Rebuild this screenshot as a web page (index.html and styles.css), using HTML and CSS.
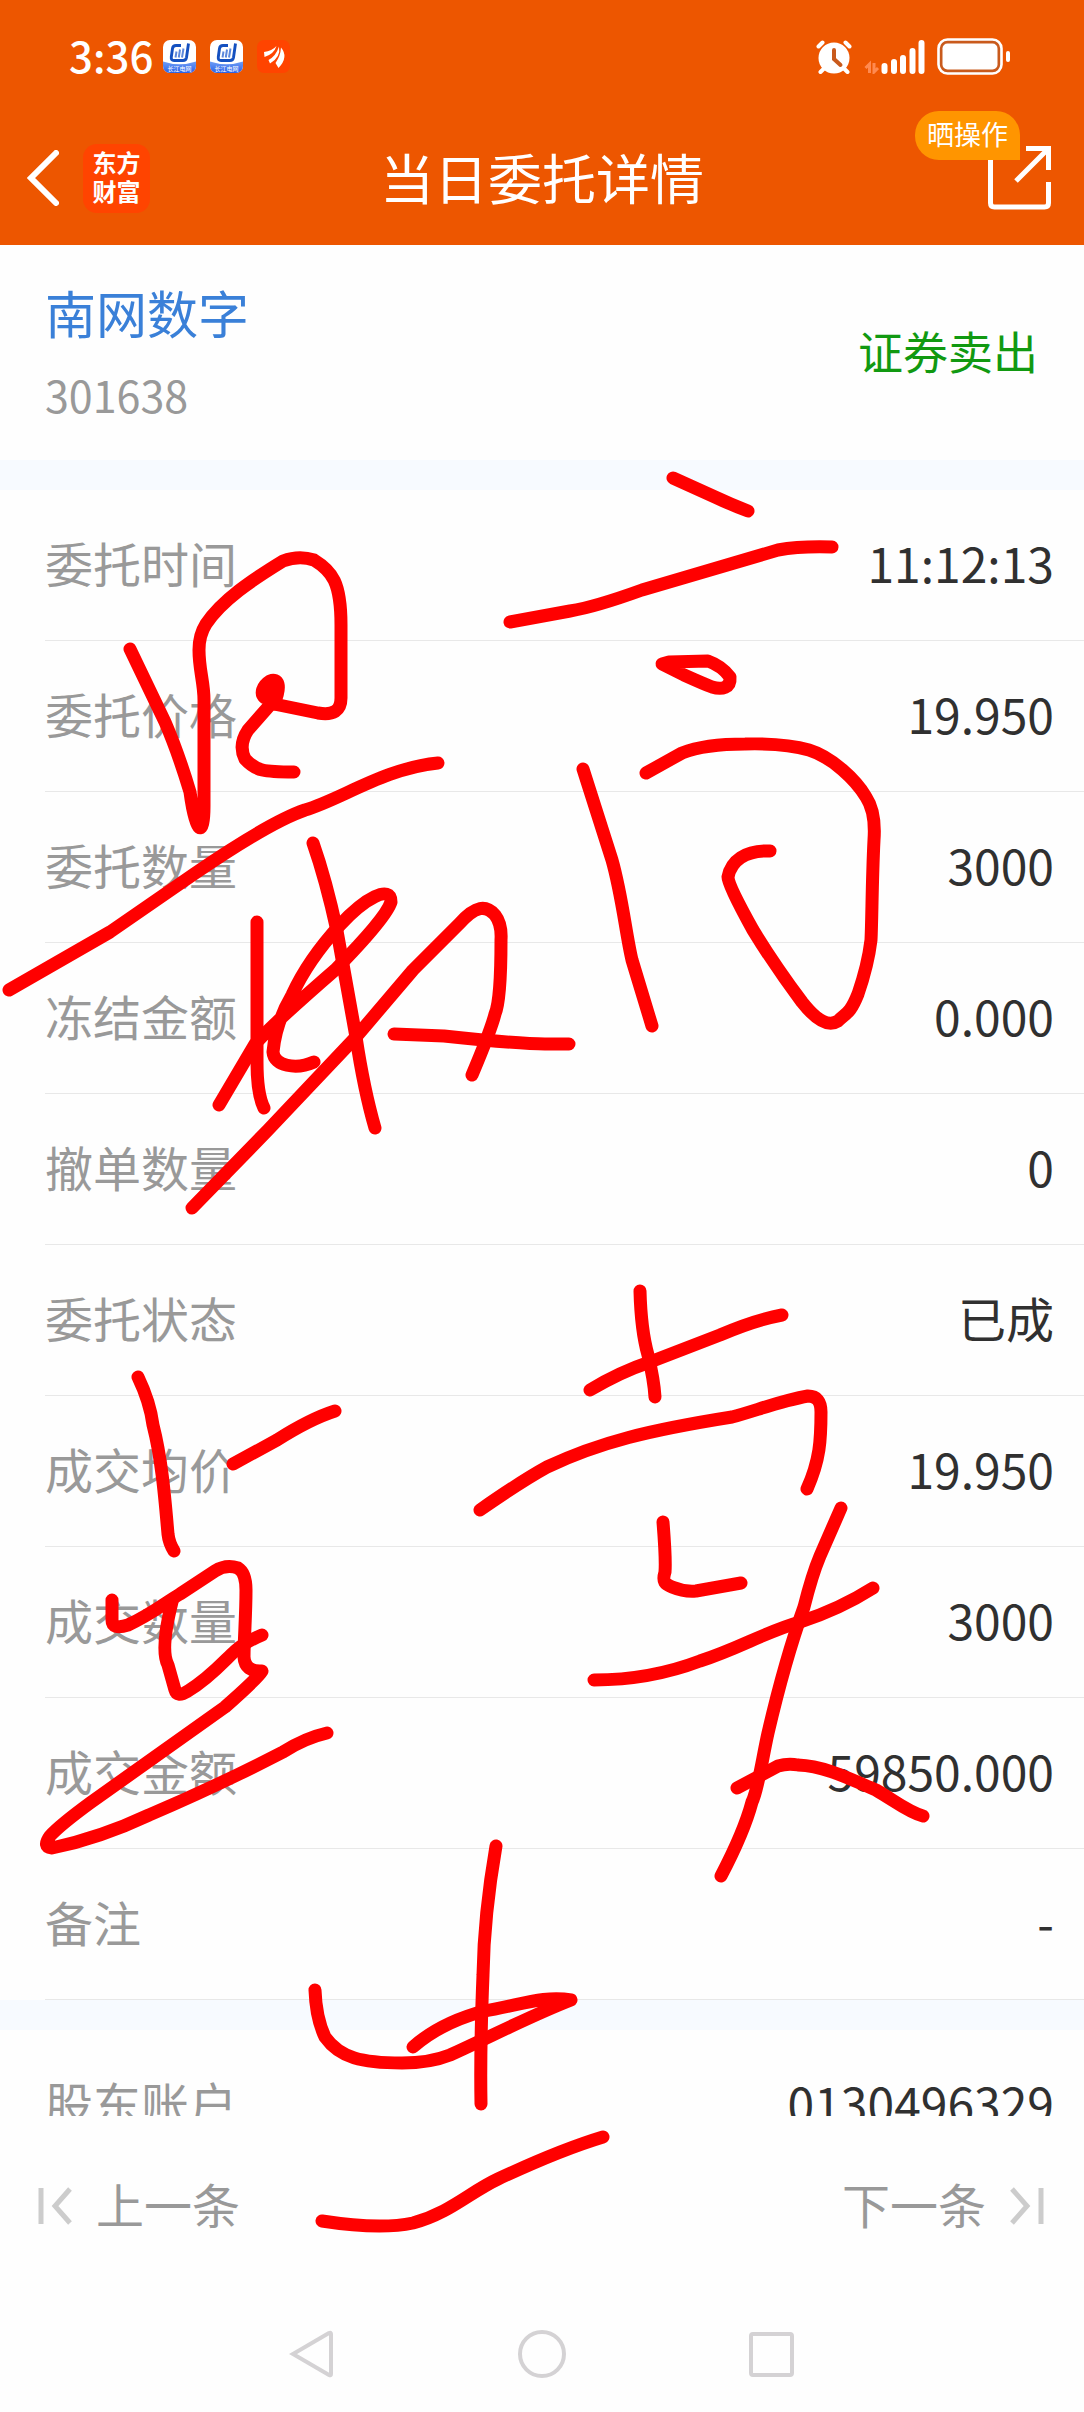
FILE: index.html
```
<!DOCTYPE html>
<html lang="zh-CN">
  <head>
    <meta charset="UTF-8" />
    <meta name="viewport" content="width=device-width, initial-scale=1.0" />
    <title>当日委托详情</title>
    <link rel="stylesheet" href="styles.css">
  </head>
  <body>
    <header class="header">
      <div class="status">
        <span class="status__time">3:36</span>
        <div class="status__apps">
          <svg class="app-icon" viewBox="0 0 33 33">
            <defs>
              <linearGradient id="wave" x1="0" y1="0" x2="0" y2="1">
                <stop offset="0" stop-color="#6f9df5" />
                <stop offset="1" stop-color="#2a62e8" />
              </linearGradient>
            </defs>
            <rect width="33" height="33" rx="7" fill="#fff" />
            <path d="M0 21.500Q16.500 27 33 21.500V26a7 7 0 0 1-7 7H7a7 7 0 0 1-7-7z" fill="url(#wave)" />
            <path d="M18 5.500h-5q-3 0-3.500 3L8.300 17q-.4 3.500 2.700 3.500h9q3 0 3.500-3L25.500 3.500" fill="none" stroke="#1450c0" stroke-width="2.900" />
            <path d="M13.500 11.500l-1 6M17 9.500l-1.200 8M20.500 8.500L19 17.500" stroke="#5c88dc" stroke-width="2" />
            <text class="app-icon__name" x="16.500" y="31" text-anchor="middle">长江电网</text>
          </svg>
          <svg class="app-icon" viewBox="0 0 33 33">
            <rect width="33" height="33" rx="7" fill="#fff" />
            <path d="M0 21.500Q16.500 27 33 21.500V26a7 7 0 0 1-7 7H7a7 7 0 0 1-7-7z" fill="url(#wave)" />
            <path d="M18 5.500h-5q-3 0-3.500 3L8.300 17q-.4 3.500 2.700 3.500h9q3 0 3.500-3L25.500 3.500" fill="none" stroke="#1450c0" stroke-width="2.900" />
            <path d="M13.500 11.500l-1 6M17 9.500l-1.200 8M20.500 8.500L19 17.500" stroke="#5c88dc" stroke-width="2" />
            <text class="app-icon__name" x="16.500" y="31" text-anchor="middle">长江电网</text>
          </svg>
          <svg class="app-icon" viewBox="0 0 33 33">
            <rect width="33" height="33" rx="7" fill="#ff4400" />
            <path d="M7 12Q15 11 19.500 6Q17 14 7.500 17zM11.500 20Q19 16 22 6.500Q24 17 13 23.500zM18.500 23Q23.500 16 24 7.500Q32 17 21.500 28z" fill="#fff" />
          </svg>
        </div>
        <div class="status__system">
          <svg width="36" height="34" viewBox="0 0 36 34">
            <circle cx="18" cy="18" r="15.500" fill="#fff" />
            <path d="M2.500 6.500l4-4M33.500 6.500l-4-4M7.500 29l-3 3M28.500 29l3 3" stroke="#fff" stroke-width="4" stroke-linecap="round" />
            <path d="M18 10v9l6.500 6" fill="none" stroke="#c95a1c" stroke-width="4" stroke-linecap="round" />
          </svg>
          <svg width="61" height="34" viewBox="0 0 61 34">
            <path d="M5.500 33V24L1.500 28M10 23v9l4-4" fill="none" stroke="#ff8a50" stroke-width="3" />
            <path d="M20.500 26v5M30 22v9M39 18v13M48.500 11v20M57.500 3v28" stroke="#fff" stroke-width="6" stroke-linecap="round" />
          </svg>
          <svg width="74" height="37" viewBox="0 0 74 37">
            <rect x="1.500" y="1.500" width="63" height="34" rx="9" fill="#c95a1c" stroke="#fff" stroke-width="2.600" />
            <rect x="5.500" y="5.500" width="55" height="26" rx="5" fill="#fff" />
            <rect x="69" y="13" width="4" height="11" rx="2" fill="#fff" />
          </svg>
        </div>
      </div>
      <div class="toolbar">
        <div class="toolbar__left">
          <button class="toolbar__back" aria-label="返回">
            <svg width="32" height="56" viewBox="0 0 32 56">
              <path d="M29 3L4 28l25 25" fill="none" stroke="#fff" stroke-width="6" stroke-linecap="round" />
            </svg>
          </button>
          <div class="brand">东方<br>财富</div>
        </div>
        <h1 class="toolbar__title">当日委托详情</h1>
        <button class="share" aria-label="分享">
          <svg width="64" height="64" viewBox="0 0 64 64">
            <path d="M3.500 0V57q0 4 4 4H57.500q4 0 4-4V36M39 2.500H61.500V24M61 3L29 35" fill="none" stroke="#fff" stroke-width="5" />
          </svg>
          <span class="share__tip">晒操作</span>
        </button>
      </div>
    </header>

    <main class="content">
      <section class="stock">
        <div>
          <h2 class="stock__name">南网数字</h2>
          <p class="stock__code">301638</p>
        </div>
        <p class="stock__side">证券卖出</p>
      </section>

      <dl class="list">
        <div class="row"><dt>委托时间</dt><dd>11:12:13</dd></div>
        <div class="row"><dt>委托价格</dt><dd>19.950</dd></div>
        <div class="row"><dt>委托数量</dt><dd>3000</dd></div>
        <div class="row"><dt>冻结金额</dt><dd>0.000</dd></div>
        <div class="row"><dt>撤单数量</dt><dd>0</dd></div>
        <div class="row"><dt>委托状态</dt><dd>已成</dd></div>
        <div class="row"><dt>成交均价</dt><dd>19.950</dd></div>
        <div class="row"><dt>成交数量</dt><dd>3000</dd></div>
        <div class="row"><dt>成交金额</dt><dd>59850.000</dd></div>
        <div class="row"><dt>备注</dt><dd>-</dd></div>
      </dl>

      <dl class="list">
        <div class="row"><dt>股东账户</dt><dd>0130496329</dd></div>
      </dl>
    </main>

    <footer class="pager">
      <button class="pager__btn">
        <svg width="34" height="38" viewBox="0 0 34 38">
          <path d="M3 1v36M32 2L17 19l15 17" fill="none" stroke="#ccc" stroke-width="5" />
        </svg>
        <span class="pager__text">上一条</span>
      </button>
      <button class="pager__btn">
        <span class="pager__text">下一条</span>
        <svg width="34" height="38" viewBox="0 0 34 38">
          <path d="M31 1v36M2 2l15 17L2 36" fill="none" stroke="#ccc" stroke-width="5" />
        </svg>
      </button>
    </footer>

    <nav class="navbar">
      <button class="navbar__btn" aria-label="后退">
        <svg viewBox="0 0 48 48"><path d="M41 3L5 24l36 21q2 1 2-1V4q0-2-2-1z" /></svg>
      </button>
      <button class="navbar__btn" aria-label="主页">
        <svg viewBox="0 0 48 48"><circle cx="24" cy="24" r="22" /></svg>
      </button>
      <button class="navbar__btn" aria-label="最近任务">
        <svg viewBox="0 0 48 48"><rect x="3" y="4" width="41" height="41" rx="2" /></svg>
      </button>
    </nav>

    <svg class="ink" viewBox="0 0 1084 2412" aria-hidden="true">
      <!-- 最 -->
      <path d="M130 649L165 722Q178 752 190 792C196 836 204 838 204 806V700C204 682 199 670 199 650Q199 635 206 624C222 600 252 580 283 561Q299 555 314 560C332 571 341 582 341 625V698Q341 717 318 713L274 704" />
      <path d="M274 704C282 685 278 678 270 681C262 686 260 694 265 698Q272 697 274 690M270 705L248 730Q238 745 245 759C256 771 264 772 294 772" />
      <path d="M9 990L110 932L194 874Q270 822 305 810C340 800 385 768 438 763" />
      <path d="M257 922V1062Q257 1094 264 1108" />
      <path d="M219 1105L255 1044Q275 1022 335 970Q386 918 391 902C391 884 365 898 340 925Q308 960 292 995C282 1012 275 1030 273 1052C274 1066 296 1070 314 1062" />
      <path d="M313 843Q326 880 337 931L356 1037Q364 1090 375 1128" />
      <path d="M192 1208L268 1130L356 1037L413 970L459 924C476 905 486 905 495 915Q502 924 501 940Q501 1000 495 1014Q491 1030 472 1075" />
      <path d="M394 1034L444 1036Q520 1044 545 1044H569" />
      <!-- 高 -->
      <path d="M673 478L715 497Q732 505 748 511" />
      <path d="M510 622L570 611Q595 607 642 590L778 550Q800 546 832 547" />
      <path d="M684 675L662 664L669 662L708 661Q722 666 730 677C731 688 722 690 712 687Q704 684 684 675" />
      <path d="M583 769L612 860C622 895 626 935 632 960L652 1026" />
      <path d="M646 773L682 753Q705 744 745 744Q785 743 809 750C832 757 856 780 866 797Q876 812 874 840C872 880 872 920 871 940Q868 965 858 994C850 1014 846 1013 838 1021Q824 1030 802 1002Q775 966 753 930Q728 885 728 877C731 861 745 850 770 851" />
      <!-- 点 -->
      <path d="M138 1377Q150 1402 153 1425C162 1460 165 1500 168 1534Q169 1543 174 1551" />
      <path d="M233 1464L277 1440Q310 1419 335 1411" />
      <path d="M112 1600V1620Q112 1630 128 1625C150 1615 165 1603 180 1594L215 1571Q226 1564 238 1568Q246 1573 246 1590C246 1615 244 1640 244 1657Q245 1672 262 1671Q258 1678 225 1707L90 1803Q60 1825 50 1836Q42 1847 52 1848Q100 1838 149 1815Q215 1787 283 1752Q305 1738 327 1733" />
      <path d="M172 1602Q160 1650 168 1665L175 1690Q177 1698 188 1691C210 1678 225 1660 235 1651Q245 1642 262 1635" />
      <!-- 卖 -->
      <path d="M640 1291Q641 1330 648 1355Q654 1380 655 1397" />
      <path d="M590 1390Q620 1372 650 1362L720 1335Q755 1320 782 1315" />
      <path d="M480 1510Q520 1482 547 1467C600 1442 650 1430 732 1417C755 1411 780 1401 808 1396Q821 1396 821 1412C821 1440 820 1460 807 1489" />
      <path d="M663 1522Q666 1560 665 1572C662 1582 665 1584 672 1587Q684 1592 696 1591L741 1583" />
      <path d="M594 1680Q650 1680 700 1661C740 1648 765 1632 800 1622Q840 1609 873 1588" />
      <path d="M841 1508L820 1556Q812 1575 804 1607Q785 1660 768 1733C762 1760 758 1790 752 1802Q744 1832 721 1876" />
      <path d="M737 1788L778 1766Q788 1763 798 1765C825 1766 850 1779 876 1790C895 1801 908 1812 923 1816" />
      <!-- 出 -->
      <path d="M496 1846Q484 1915 483 1975Q480 2050 481 2104" />
      <path d="M315 1990Q316 2018 325 2037C340 2058 362 2063 402 2063Q430 2063 450 2055C490 2037 530 2016 571 2000C545 1995 520 2005 484 2011Q440 2023 413 2047" />
      <path d="M322 2221Q380 2230 413 2223C450 2213 470 2192 498 2179Q560 2150 603 2137" />
    </svg>
  </body>
</html>
```

FILE: styles.css
```
* {
  margin: 0;
  padding: 0;
  box-sizing: border-box;
}

body {
  font-family: 'Noto Sans CJK SC', sans-serif;
  font-size: 48px;
  line-height: 60px;
  color: #303030;
  background-color: #fefefe;
  height: 100vh;
  position: relative;
  overflow: hidden;

  display: flex;
  flex-direction: column;
}

button {
  border: none;
  background: none;
  font: inherit;
  color: inherit;
  cursor: pointer;
}

svg {
  display: block;
}

/* ===== header ===== */
.header {
  flex: none;
  color: #fff;
  background-color: #ed5600;
}

.status {
  height: 113px;
  padding: 0 73px 0 69px;
  display: flex;
  align-items: center;
}

.status__time {
  font-size: 42px;
  font-weight: 500;
  padding-bottom: 4px;
  margin-right: 10px;
}

.status__apps {
  display: flex;
  gap: 14px;
}

.app-icon {
  width: 33px;
  height: 33px;
}

.app-icon__name {
  font-size: 6px;
  fill: #fff;
}

.status__system {
  margin-left: auto;
  display: flex;
  align-items: center;
  gap: 12px;
}

.toolbar {
  height: 132px;
  padding: 0 33px 2px 33px;
  display: grid;
  grid-template-columns: 1fr auto 1fr;
  align-items: center;
}

.toolbar__left {
  margin-left: -6px;
  display: flex;
  align-items: center;
  gap: 24px;
}

.brand {
  width: 67px;
  height: 69px;
  padding-top: 3px;
  border-radius: 14px;
  background-color: #ff4400;
  font-size: 24px;
  font-weight: 700;
  line-height: 29px;
  text-align: center;
}

.toolbar__title {
  padding-bottom: 2px;
  font-size: 54px;
  font-weight: 400;
}

.share {
  position: relative;
  justify-self: end;
}

.share__tip {
  position: absolute;
  right: 31px;
  bottom: 50px;
  padding: 0 12px 4px;
  border-radius: 24px 24px 0 24px;
  background-color: #ff9500;
  font-size: 27px;
  line-height: 45px;
  white-space: nowrap;
}

/* ===== content ===== */
.content {
  flex: 1;
  min-height: 0;
  overflow: hidden;
}

.stock {
  height: 215px;
  padding: 0 46px 0 45px;
  display: flex;
  align-items: center;
  justify-content: space-between;
}

.stock__name {
  font-size: 51px;
  font-weight: 400;
  color: #3a80d8;
  margin-bottom: 22px;
}

.stock__code {
  font-size: 43px;
  color: #999;
}

.stock__side {
  padding-bottom: 4px;
  font-size: 45px;
  color: #119911;
}

.list {
  border-top: 30px solid #f7faff;
}

.row {
  height: 151px;
  margin-left: 45px;
  padding: 0 30px 6px 0;
  border-bottom: 1px solid #e8e8e8;
  display: flex;
  align-items: center;
  justify-content: space-between;
}

.row dt {
  color: #999;
}

/* ===== footer ===== */
.pager {
  flex: none;
  height: 180px;
  padding: 0 40px 0 38px;
  display: flex;
  align-items: center;
  justify-content: space-between;
}

.pager__btn {
  display: flex;
  align-items: center;
  gap: 24px;
  color: #999;
}

.pager__text {
  padding-bottom: 6px;
}

.navbar {
  flex: none;
  height: 116px;
  display: flex;
  align-items: center;
  justify-content: center;
  gap: 182px;
}

.navbar__btn svg {
  width: 48px;
  height: 48px;
  fill: none;
  stroke: #d4d2d4;
  stroke-width: 4px;
}

/* red pen over the whole screen */
.ink {
  position: absolute;
  top: 0;
  left: 0;
  width: 100%;
  pointer-events: none;
}

.ink path {
  fill: none;
  stroke: #ff0000;
  stroke-width: 13px;
  stroke-linecap: round;
  stroke-linejoin: round;
}
```
